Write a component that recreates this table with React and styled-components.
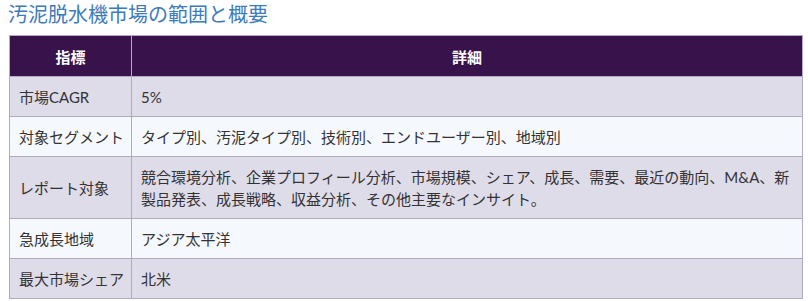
import React from "react";
import styled, { createGlobalStyle } from "styled-components";

const Global = createGlobalStyle`
  html, body { margin: 0; padding: 0; background: #ffffff; }
  body { font-family: Lato, "Noto Sans CJK JP", sans-serif; }
`;

const Page = styled.div`
  padding: 0 5px 0 9px;
`;

const Title = styled.h2`
  margin: 0 0 0 -1px;
  padding-top: 1px;
  height: 34px;
  font-family: "Noto Sans CJK JP", sans-serif;
  font-weight: 400;
  font-size: 20px;
  line-height: 26px;
  color: #3b7bbb;
`;

const Table = styled.table`
  width: 794px;
  border-collapse: collapse;
  table-layout: fixed;
  font-family: Lato, "Noto Sans CJK JP", sans-serif;
  font-size: 15px;
  color: #333333;
`;

const Col = styled.col`
  width: ${(p) => p.$w || "auto"};
`;

const Th = styled.th`
  background: #37124b;
  color: #ffffff;
  font-weight: 700;
  height: 40px;
  padding: 0 6px;
  border: 1px solid #b7a7c9;
  font-size: 15px;
  text-align: center;
`;

const Row = styled.tr`
  background: ${(p) => (p.$alt ? "#f5f8fd" : "#dfdcea")};
`;

const Td = styled.td`
  border: 1px solid #b1aabd;
  padding: 9px 6px 8px 9px;
  line-height: 22px;
  vertical-align: middle;
  text-align: left;
  white-space: ${(p) => (p.$key ? "nowrap" : "normal")};
`;

const rows = [
  ["市場CAGR", "5%"],
  ["対象セグメント", "タイプ別、汚泥タイプ別、技術別、エンドユーザー別、地域別"],
  [
    "レポート対象",
    "競合環境分析、企業プロフィール分析、市場規模、シェア、成長、需要、最近の動向、M&A、新製品発表、成長戦略、収益分析、その他主要なインサイト。",
  ],
  ["急成長地域", "アジア太平洋"],
  ["最大市場シェア", "北米"],
];

export default function App() {
  return (
    <Page>
      <Global />
      <Title>汚泥脱水機市場の範囲と概要</Title>
      <Table>
        <colgroup>
          <Col $w="122px" />
          <Col />
        </colgroup>
        <thead>
          <tr>
            <Th>指標</Th>
            <Th>詳細</Th>
          </tr>
        </thead>
        <tbody>
          {rows.map(([k, v], i) => (
            <Row key={k} $alt={i % 2 === 1}>
              <Td $key>{k}</Td>
              <Td>{v}</Td>
            </Row>
          ))}
        </tbody>
      </Table>
    </Page>
  );
}
